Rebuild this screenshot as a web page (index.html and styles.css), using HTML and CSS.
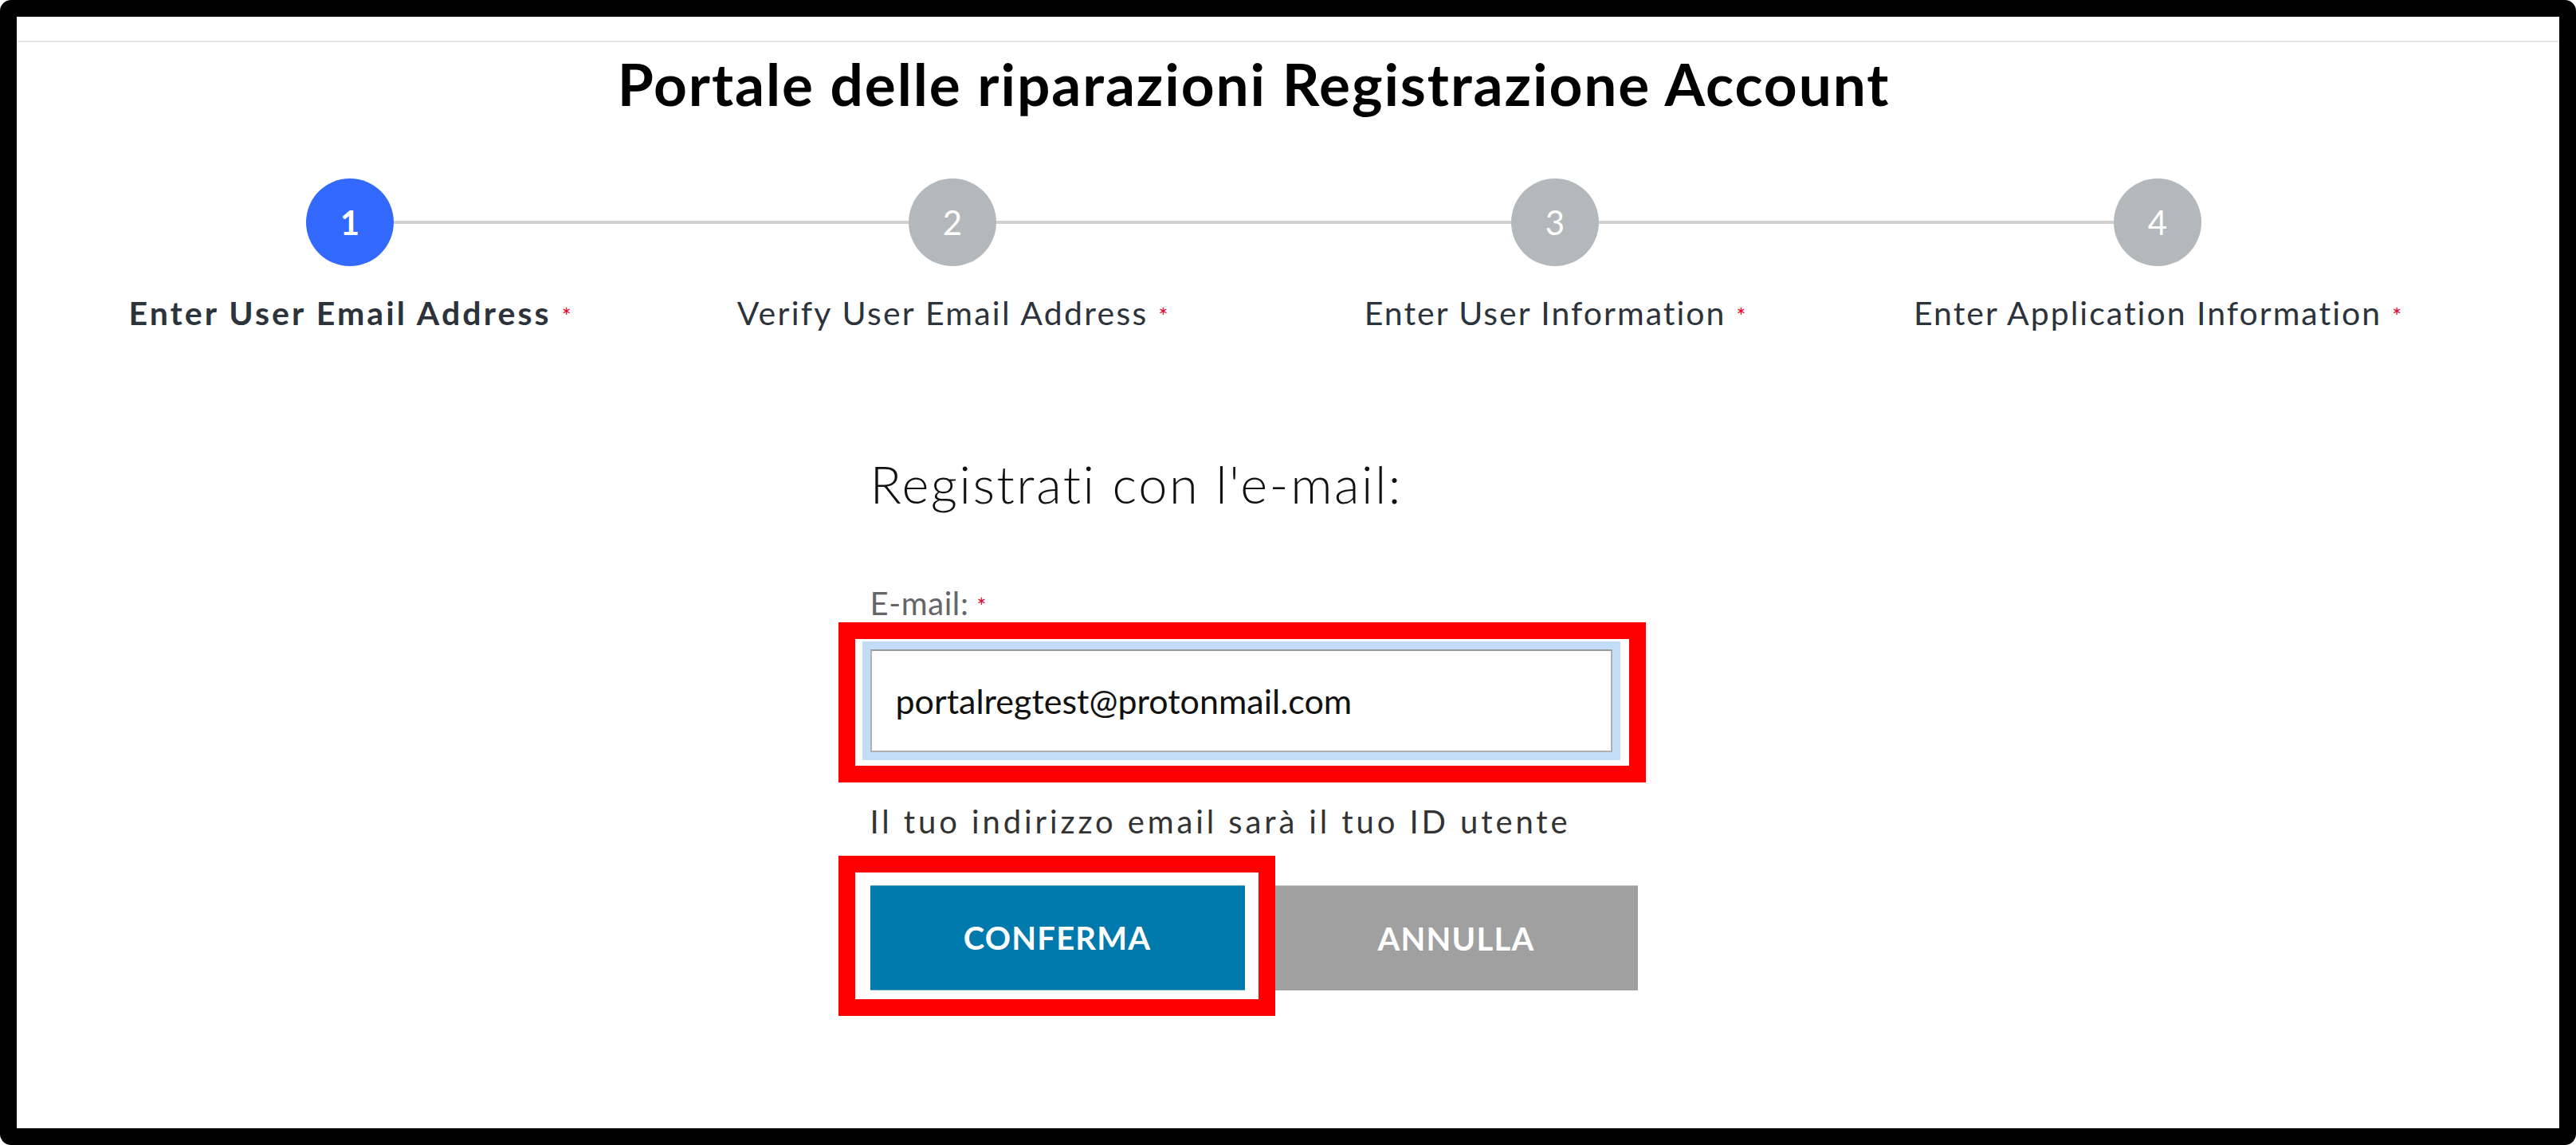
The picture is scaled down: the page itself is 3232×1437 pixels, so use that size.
FILE: index.html
```html
<!DOCTYPE html>
<html lang="it">
<head>
<meta charset="utf-8">
<title>Portale delle riparazioni Registrazione Account</title>
<link rel="stylesheet" href="styles.css">
</head>
<body>
<div class="frame">
  <div class="topbar"></div>
  <main class="page">
    <h1 class="title">Portale delle riparazioni Registrazione Account</h1>
    <ol class="stepper">
      <li class="step step-active">
        <div class="track"><span class="seg seg-none"></span><span class="dot">1</span><span class="seg"></span></div>
        <div class="step-label"><span class="txt">Enter User Email Address</span><span class="req">*</span></div>
      </li>
      <li class="step">
        <div class="track"><span class="seg"></span><span class="dot">2</span><span class="seg"></span></div>
        <div class="step-label step-label-wide"><span class="txt">Verify User Email Address</span><span class="req">*</span></div>
      </li>
      <li class="step">
        <div class="track"><span class="seg"></span><span class="dot">3</span><span class="seg"></span></div>
        <div class="step-label"><span class="txt">Enter User Information</span><span class="req">*</span></div>
      </li>
      <li class="step">
        <div class="track"><span class="seg"></span><span class="dot">4</span><span class="seg seg-none"></span></div>
        <div class="step-label"><span class="txt">Enter Application Information</span><span class="req">*</span></div>
      </li>
    </ol>
    <section class="form">
      <h2 class="form-title">Registrati con l'e-mail:</h2>
      <label class="field-label" for="email">E-mail:<span class="req">*</span></label>
      <div class="field highlight-input">
        <input id="email" class="input" type="email" value="portalregtest@protonmail.com">
      </div>
      <p class="hint">Il tuo indirizzo email sarà il tuo ID utente</p>
      <div class="actions">
        <div class="btn-wrap highlight-btn"><button class="btn btn-primary" type="button">CONFERMA</button></div>
        <button class="btn btn-secondary" type="button">ANNULLA</button>
      </div>
    </section>
  </main>
</div>
</body>
</html>
```

FILE: styles.css
```css
* { box-sizing: border-box; }
html, body { margin: 0; padding: 0; background: #fff; }
body { font-family: Lato, "Liberation Sans", Arial, sans-serif; }

.frame {
  width: 3232px;
  height: 1437px;
  border: 21px solid #000;
  border-radius: 14px;
  background: #fff;
  overflow: hidden;
}
.topbar { height: 32px; border-bottom: 2px solid #e6e6e6; }
.page { width: 3024px; margin-left: 40px; }

.title {
  margin: 16px 0 0;
  font-size: 73px;
  line-height: 72px;
  font-weight: 700;
  letter-spacing: 1.9px;
  text-align: center;
  color: #000;
}

.stepper {
  list-style: none;
  margin: 83px 0 0;
  padding: 0;
  display: grid;
  grid-template-columns: repeat(4, 756px);
}
.track { display: flex; align-items: center; height: 110px; }
.seg { flex: 1; height: 4px; background: #d0d0d0; }
.seg-none { visibility: hidden; }
.dot {
  width: 110px;
  height: 110px;
  border-radius: 50%;
  background: #b3b8bc;
  color: #fff;
  font-size: 42px;
  display: flex;
  align-items: center;
  justify-content: center;
}
.step-active .dot { background: #3369ff; font-weight: 700; }
.step-label {
  margin-top: 35px;
  text-align: center;
  font-size: 41px;
  line-height: 48px;
  letter-spacing: 2px;
  color: #2d333b;
}
.step-label-wide { letter-spacing: 2.25px; }
.step-active .step-label { font-weight: 700; letter-spacing: 3.1px; }
.req {
  color: #e4002b;
  font-size: 28px;
  line-height: 0;
  margin-left: 13px;
  font-weight: 400;
  letter-spacing: 0;
}

.form { width: 963px; margin: 151px auto 0; }
.form-title {
  margin: 0;
  font-size: 65px;
  line-height: 78px;
  font-weight: 300;
  letter-spacing: 2.5px;
  color: #111;
}
.field-label {
  display: block;
  margin-top: 87px;
  font-size: 40px;
  line-height: 48px;
  letter-spacing: 0.6px;
  color: #666;
}
.field-label .req { margin-left: 10px; }
.field { position: relative; margin-top: 34px; width: 931px; }
.input {
  display: block;
  width: 931px;
  height: 129px;
  border: 2px solid #b0b0b0;
  border-top-color: #9a9a9a;
  box-shadow: 0 0 0 10px #c3ddf8;
  padding: 0 30px;
  font-family: Lato, "Liberation Sans", Arial, sans-serif;
  font-size: 43px;
  color: #111;
  outline: none;
  background: #fff;
}
.highlight-input::after {
  content: "";
  position: absolute;
  left: -40px; right: -42px; top: -34px; bottom: -38px;
  border: 21px solid #ff0000;
  pointer-events: none;
}
.hint {
  margin: 63px 0 0;
  font-size: 40px;
  line-height: 48px;
  color: #333;
  letter-spacing: 3.9px;
}
.actions { display: flex; gap: 38px; margin-top: 56px; }
.btn-wrap { position: relative; }
.btn {
  display: block;
  height: 132px;
  border: 0;
  font-family: Lato, "Liberation Sans", Arial, sans-serif;
  font-size: 40px;
  font-weight: 700;
  letter-spacing: 1.2px;
  color: #fff;
  padding: 0;
}
.btn-primary { width: 470px; background: #0079ad; border-top: 1px solid #5aa7cc; border-bottom: 1px solid #5aa7cc; }
.btn-secondary { width: 455px; background: #a0a0a0; border-top: 1px solid #c4c4c4; }
.highlight-btn::after {
  content: "";
  position: absolute;
  left: -40px; right: -38px; top: -37px; bottom: -32px;
  border: 21px solid #ff0000;
  pointer-events: none;
}
```
